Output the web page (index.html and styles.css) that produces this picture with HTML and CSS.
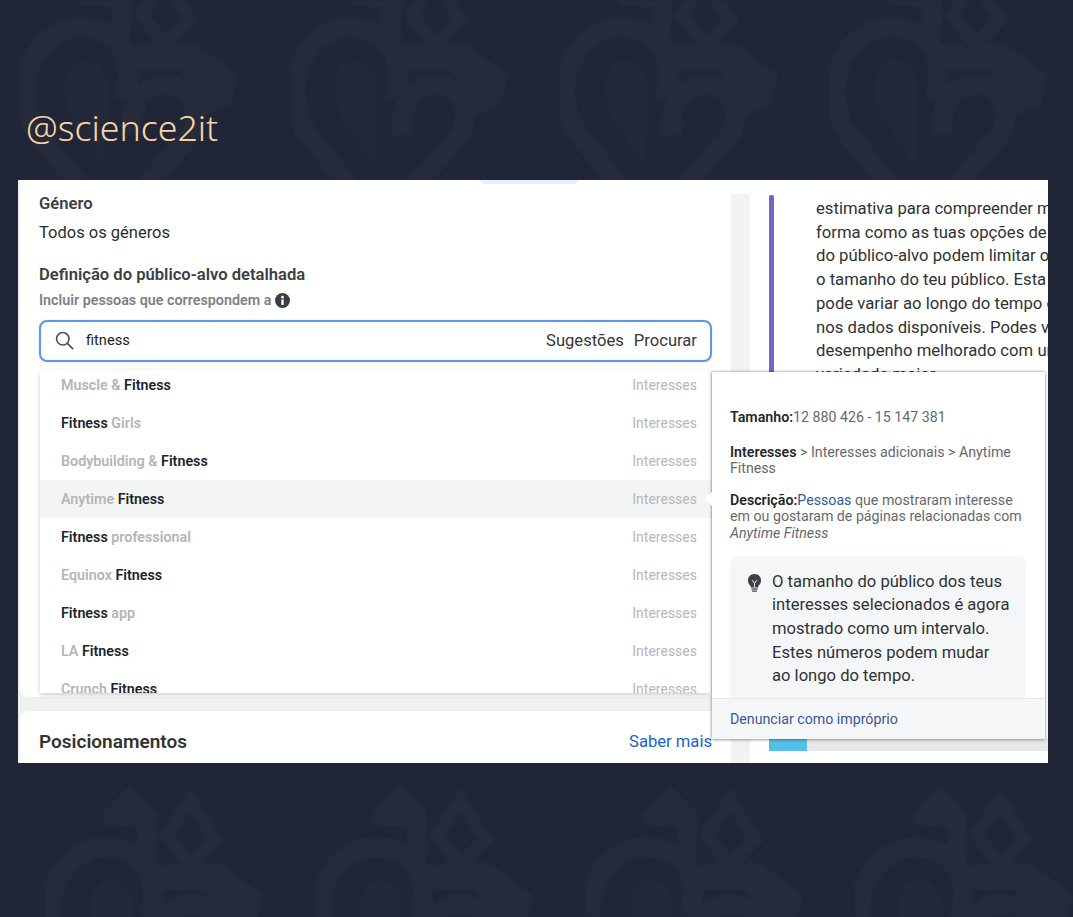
FILE: index.html
```html
<!DOCTYPE html>
<html>
  <head>
    <title>science2it</title>
    <link rel="stylesheet" href="styles.css">
  </head>
  <body>
    <div class="page">
      <svg class="watermark" width="1073" height="917">
        <defs>
          <g id="mark">
            <g fill="none" stroke="#252b3b" stroke-width="20">
              <path d="M95 265 L15 165 C-10 120 15 62 62 62 C100 65 115 90 105 135"/>
              <path d="M100 250 L170 170 C185 140 165 115 140 120 C118 125 110 145 112 170"/>
            </g>
            <path d="M145 15 L170 55 L145 80 L122 50Z" fill="none" stroke="#252b3b" stroke-width="13"/>
            <path d="M85 0 L112 28 L112 42 L110 88 L92 88 L92 42 L60 40 L58 28Z" fill="#252b3b"/>
            <path d="M110 80 L175 78 L218 110 L210 140 L185 150 L160 105 L110 105Z" fill="#252b3b"/>
            <path d="M65 95 C45 95 40 125 50 150 L85 200 L88 130 C88 110 80 95 65 95Z" fill="#232939"/>
          </g>
          <pattern id="motif-top" x="20" y="-35" width="270" height="400" patternUnits="userSpaceOnUse">
            <use href="#mark"/>
          </pattern>
          <pattern id="motif-bottom" x="45" y="785" width="270" height="400" patternUnits="userSpaceOnUse">
            <use href="#mark"/>
          </pattern>
        </defs>
        <rect width="1073" height="400" fill="url(#motif-top)"/>
        <rect y="700" width="1073" height="217" fill="url(#motif-bottom)"/>
      </svg>

      <h1 class="handle">@science2it</h1>

      <div class="shot">
        <div class="main">
          <div class="panel audience">
            <div class="label">Género</div>
            <div class="value">Todos os géneros</div>
            <div class="label label-big">Definição do público-alvo detalhada</div>
            <div class="hint">
              Incluir pessoas que correspondem a
              <svg width="15" height="15" viewBox="0 0 14 14">
                <circle cx="7" cy="7" r="7" fill="#3b3e44"/>
                <circle cx="7" cy="3.9" r="1.3" fill="#fff"/>
                <rect x="5.9" y="6" width="2.2" height="5.2" fill="#fff"/>
              </svg>
            </div>
            <div class="search">
              <svg width="19" height="19" viewBox="0 0 20 20" fill="none" stroke="#4a4d52" stroke-width="1.7">
                <circle cx="8.2" cy="8.2" r="6.6"/>
                <path d="M13 13 L18.6 18.6" stroke-linecap="round"/>
              </svg>
              <span class="search-text">fitness</span>
              <span class="search-tab">Sugestões</span>
              <span class="search-tab">Procurar</span>
            </div>
          </div>
          <div class="panel placements">
            <span class="placements-title">Posicionamentos</span>
            <span class="more">Saber mais</span>
          </div>
        </div>

        <div class="strip"></div>

        <div class="side">
          <div class="note">
            <div class="note-bar"></div>
            <p class="note-text">estimativa para compreender melhor a
forma como as tuas opções de definição
do público-alvo podem limitar ou alargar
o tamanho do teu público. Esta estimativa
pode variar ao longo do tempo consoante
nos dados disponíveis. Podes ver um
desempenho melhorado com um público
variedade maior</p>
          </div>
          <div class="track"><div class="track-fill"></div></div>
        </div>

        <div class="tab-edge"></div>

        <ul class="dropdown">
          <li class="row"><span><i>Muscle &amp; </i>Fitness</span><span class="kind">Interesses</span></li>
          <li class="row"><span>Fitness<i> Girls</i></span><span class="kind">Interesses</span></li>
          <li class="row"><span><i>Bodybuilding &amp; </i>Fitness</span><span class="kind">Interesses</span></li>
          <li class="row row-active"><span><i>Anytime </i>Fitness</span><span class="kind">Interesses</span></li>
          <li class="row"><span>Fitness<i> professional</i></span><span class="kind">Interesses</span></li>
          <li class="row"><span><i>Equinox </i>Fitness</span><span class="kind">Interesses</span></li>
          <li class="row"><span>Fitness<i> app</i></span><span class="kind">Interesses</span></li>
          <li class="row"><span><i>LA </i>Fitness</span><span class="kind">Interesses</span></li>
          <li class="row"><span><i>Crunch </i>Fitness</span><span class="kind">Interesses</span></li>
        </ul>

        <div class="tip">
          <div class="tip-arrow"></div>
          <div class="tip-body">
            <p class="tip-line tip-size"><b>Tamanho:</b>12 880 426 - 15 147 381</p>
            <p class="tip-line tip-path"><b>Interesses</b> &gt; Interesses adicionais &gt; Anytime Fitness</p>
            <p class="tip-line"><b>Descrição:</b><span class="tip-link">Pessoas</span> que mostraram interesse em ou gostaram de páginas relacionadas com <em>Anytime Fitness</em></p>
            <div class="tip-box">
              <svg width="15" height="20" viewBox="0 0 16 20">
                <path d="M8 0.5 C3.8 0.5 1 3.6 1 7.2 C1 10 2.6 11.4 3.6 13 C4 13.7 4.1 14.2 4.2 14.8 L11.8 14.8 C11.9 14.2 12 13.7 12.4 13 C13.4 11.4 15 10 15 7.2 C15 3.6 12.2 0.5 8 0.5Z" fill="#3d4045"/>
                <path d="M5.4 7 L8 10.2 L10.6 7 M8 10.2 L8 14.5" fill="none" stroke="#f5f6f7" stroke-width="1"/>
                <rect x="4.6" y="15.8" width="6.8" height="1.3" fill="#3d4045"/>
                <rect x="5.4" y="18" width="5.2" height="1.3" fill="#3d4045"/>
              </svg>
              <p class="tip-box-text">O tamanho do público dos teus interesses selecionados é agora mostrado como um intervalo. Estes números podem mudar ao longo do tempo.</p>
            </div>
          </div>
          <div class="tip-foot">Denunciar como impróprio</div>
        </div>
      </div>
    </div>
  </body>
</html>
```

FILE: styles.css
```css
body{
  margin: 0;
  background-color: #202638;
  font-family: Roboto, "Liberation Sans", sans-serif;
}
.page{
  position: relative;
  width: 1073px;
  height: 917px;
  padding: 103px 25px 0 18px;
  box-sizing: border-box;
  overflow: hidden;
}
.watermark{
  position: absolute;
  left: 0;
  top: 0;
  filter: blur(1px);
}
.handle{
  position: relative;
  margin: 0 0 29px;
  padding-left: 8px;
  font-family: "Noto Sans", sans-serif;
  font-size: 35.7px;
  font-weight: 300;
  line-height: 48px;
  color: #fbd2a5;
}

/* the screenshot */
.shot{
  position: relative;
  display: flex;
  height: 583px;
  background-color: white;
  overflow: hidden;
}
.main{
  width: 711px;
  padding-left: 2px;
  background-color: #f0f1f1;
  flex-shrink: 0;
}
.panel{
  background-color: white;
}
.audience{
  height: 517px;
  padding: 14px 19px 0;
  box-sizing: border-box;
  border-radius: 0 0 8px 8px;
}
.label{
  font-size: 16.6px;
  font-weight: 600;
  line-height: 19px;
  color: #3c3e42;
}
.label-big{
  margin-top: 22px;
}
.value{
  margin-top: 10px;
  font-size: 16.5px;
  line-height: 20px;
  color: #2a2c30;
}
.hint{
  display: flex;
  align-items: center;
  gap: 4px;
  margin-top: 7px;
  font-size: 14.3px;
  font-weight: 600;
  line-height: 18px;
  color: #7d8085;
}
.search{
  display: flex;
  align-items: center;
  height: 42px;
  margin-top: 11px;
  padding: 0 13px 2px 14px;
  box-sizing: border-box;
  border: 2px solid #6296de;
  border-radius: 8px;
  box-shadow: 0 0 2px #c7dcf7, inset 0 0 2px #d3e3f9;
}
.search-text{
  flex: 1;
  margin-left: 12px;
  font-size: 14.6px;
  color: #222;
}
.search-tab{
  margin-left: 10px;
  font-size: 16.6px;
  color: #35373b;
}
.placements{
  display: flex;
  justify-content: space-between;
  align-items: center;
  height: 60px;
  margin-top: 14px;
  padding: 0 19px;
  border-radius: 8px 8px 0 0;
}
.placements-title{
  font-size: 19px;
  font-weight: 600;
  color: #333;
}
.more{
  font-size: 16.6px;
  color: #1a62c5;
}

.strip{
  width: 19px;
  margin-top: 14px;
  background-color: #f2f2f2;
  flex-shrink: 0;
}
.side{
  flex: 1;
  min-width: 0;
  display: flex;
  flex-direction: column;
  padding: 15px 0 12px 19px;
  overflow: hidden;
}
.note{
  flex: 1;
  display: flex;
  gap: 42px;
  min-height: 0;
}
.note-bar{
  width: 5px;
  background-color: #7a62c0;
  border-radius: 2px 2px 0 0;
  flex-shrink: 0;
}
.note-text{
  margin: 2px 0 0;
  font-size: 16.7px;
  line-height: 23.7px;
  white-space: pre;
  color: #303236;
}
.track{
  height: 13px;
  background-color: #e6e8ea;
}
.track-fill{
  width: 38px;
  height: 100%;
  background-color: #55bfe9;
}

.tab-edge{
  position: absolute;
  left: 462px;
  top: 0;
  width: 98px;
  height: 4px;
  background-color: #e9f0fb;
  border-radius: 0 0 6px 6px;
}

/* search results */
.dropdown{
  position: absolute;
  left: 22px;
  top: 190px;
  width: 671px;
  height: 323px;
  margin: 0;
  padding: 0;
  list-style: none;
  background-color: white;
  border-radius: 6px 6px 0 0;
  box-shadow: 0 2px 5px rgba(0, 0, 0, 0.2);
  overflow: hidden;
}
.row{
  display: flex;
  justify-content: space-between;
  align-items: center;
  height: 38px;
  padding: 0 14px 0 21px;
  font-size: 14.3px;
  font-weight: 600;
  color: #1c2430;
}
.row:first-child{
  margin-top: -4.4px;
}
.row i{
  font-style: normal;
  color: #b3b5b9;
}
.row-active{
  background-color: #f3f5f5;
}
.kind{
  font-size: 14px;
  font-weight: 400;
  color: #b4b7bb;
}

/* hover card */
.tip{
  position: absolute;
  left: 694px;
  top: 192px;
  display: flex;
  flex-direction: column;
  width: 333px;
  height: 367px;
  background-color: white;
  box-shadow: 0 0 3px rgba(0, 0, 0, 0.4), 0 1px 3px rgba(0, 0, 0, 0.2);
}
.tip-arrow{
  position: absolute;
  left: -5px;
  top: 122px;
  width: 10px;
  height: 10px;
  background-color: white;
  transform: rotate(45deg);
}
.tip-body{
  position: relative;
  flex: 1;
  min-height: 0;
  padding: 37px 19px 0 18px;
  overflow: hidden;
}
.tip-line{
  margin: 0 0 14px;
  font-size: 14.2px;
  line-height: 16.6px;
  color: #65686c;
}
.tip-size{
  margin-bottom: 18px;
}
.tip-path{
  margin-bottom: 15px;
}
.tip-line b{
  font-weight: 600;
  color: #24262a;
}
.tip-link{
  color: #365899;
}
.tip-box{
  display: flex;
  gap: 10px;
  padding: 14px 15px 20px 17px;
  background-color: #f5f6f7;
  border-radius: 8px;
}
.tip-box svg{
  margin-top: 3px;
  flex-shrink: 0;
}
.tip-box-text{
  margin: 0;
  font-size: 16.6px;
  line-height: 23.7px;
  color: #303236;
}
.tip-foot{
  height: 41px;
  padding-left: 18px;
  line-height: 41px;
  font-size: 14.2px;
  color: #365899;
  background-color: #f5f6f7;
  border-top: 1px solid #e6e8ea;
  box-sizing: border-box;
}
```
